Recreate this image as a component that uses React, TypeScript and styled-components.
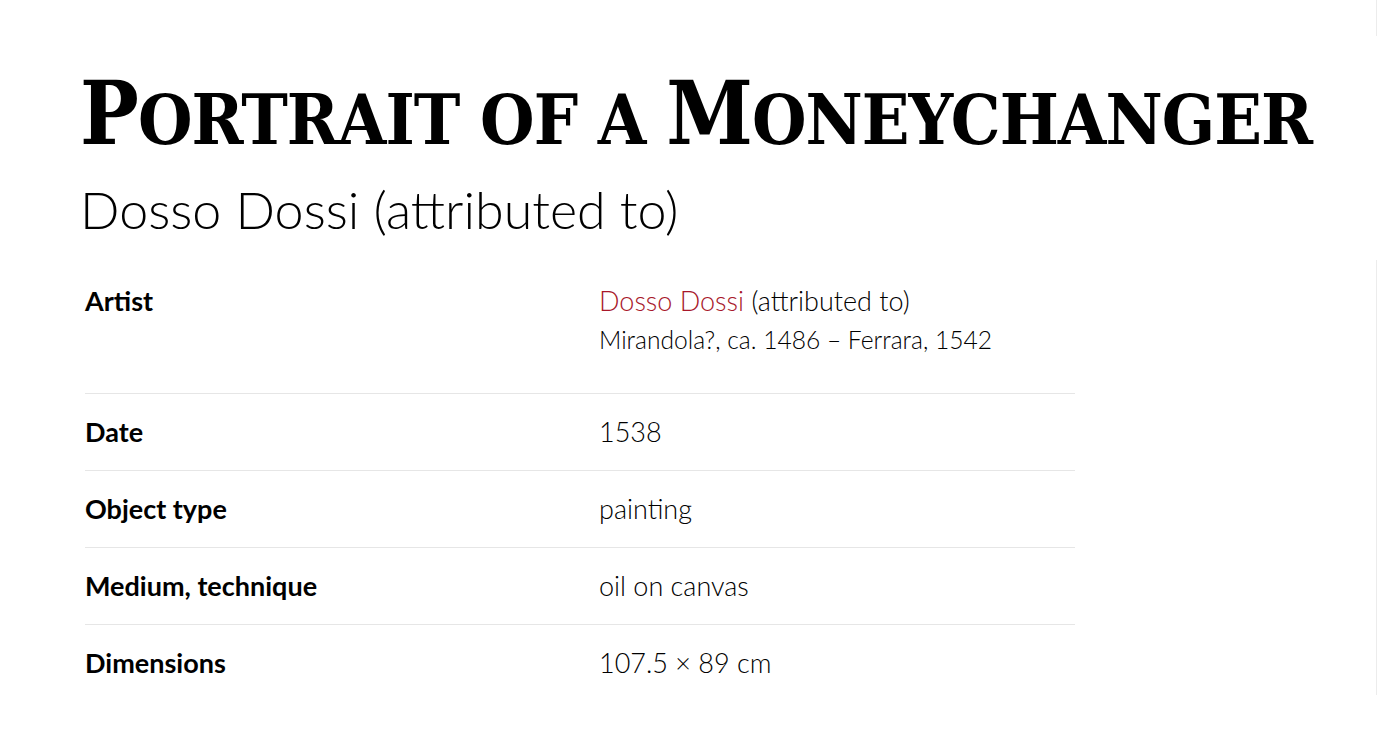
import React from "react";
import styled, { createGlobalStyle } from "styled-components";

const Global = createGlobalStyle`
  html, body { margin: 0; padding: 0; background: #ffffff; }
  body { font-family: "Lato", "Liberation Sans", sans-serif; color: #111; }
`;

const Page = styled.div`
  display: flex;
  min-height: 752px;
`;

const Main = styled.main`
  flex: 1;
  padding: 64px 0 0 80px;
`;

const EdgeRail = styled.div`
  width: 1px;
  display: flex;
  flex-direction: column;
`;

const EdgeSegment = styled.div<{ $h: number; $on?: boolean }>`
  height: ${(p) => p.$h}px;
  background: ${(p) => (p.$on ? "#ececec" : "transparent")};
`;

const Title = styled.h1`
  margin: 0;
  font-family: "DejaVu Serif", serif;
  font-stretch: condensed;
  font-weight: 700;
  font-size: 87px;
  line-height: 100px;
  letter-spacing: -1px;
  color: #000;
  white-space: nowrap;
`;

const SmallCaps = styled.span`
  font-size: 0.8em;
  text-transform: uppercase;
`;

const Subtitle = styled.h2`
  margin: 9px 0 0;
  font-family: "Lato", sans-serif;
  font-weight: 300;
  font-size: 52px;
  line-height: 60px;
  color: #000;
`;

const Table = styled.dl`
  margin: 24px 0 0 5px;
  width: 990px;
`;

const Row = styled.div<{ $last?: boolean }>`
  display: grid;
  grid-template-columns: 514px 1fr;
  padding: 23px 0;
  border-bottom: ${(p) => (p.$last ? "none" : "1px solid #e6e6e6")};
`;

const Label = styled.dt`
  margin: 0;
  font-family: "Lato", sans-serif;
  font-weight: 700;
  font-size: 27px;
  line-height: 30px;
  color: #000;
`;

const Value = styled.dd`
  margin: 0;
  font-family: "Lato", sans-serif;
  font-weight: 300;
  font-size: 27px;
  line-height: 30px;
  color: #000;
`;

const ArtistLink = styled.a`
  color: #a8172a;
  text-decoration: none;
`;

const Life = styled.div`
  margin: 9px 0 15px;
  font-size: 24.6px;
  line-height: 30px;
  font-weight: 300;
`;

const rows: { label: string; value: string }[] = [
  { label: "Date", value: "1538" },
  { label: "Object type", value: "painting" },
  { label: "Medium, technique", value: "oil on canvas" },
  { label: "Dimensions", value: "107.5 × 89 cm" },
];

export default function App() {
  return (
    <>
      <Global />
      <Page>
        <Main>
          <Title>
            P<SmallCaps>ortrait of a </SmallCaps>M<SmallCaps>oneychanger</SmallCaps>
          </Title>
          <Subtitle>Dosso Dossi (attributed to)</Subtitle>
          <Table>
            <Row>
              <Label>Artist</Label>
              <Value>
                <ArtistLink href="#">Dosso Dossi</ArtistLink> (attributed to)
                <Life>Mirandola?, ca. 1486 – Ferrara, 1542</Life>
              </Value>
            </Row>
            {rows.map((r, i) => (
              <Row key={r.label} $last={i === rows.length - 1}>
                <Label>{r.label}</Label>
                <Value>{r.value}</Value>
              </Row>
            ))}
          </Table>
        </Main>
        <EdgeRail>
          <EdgeSegment $h={36} $on />
          <EdgeSegment $h={224} />
          <EdgeSegment $h={435} $on />
        </EdgeRail>
      </Page>
    </>
  );
}
